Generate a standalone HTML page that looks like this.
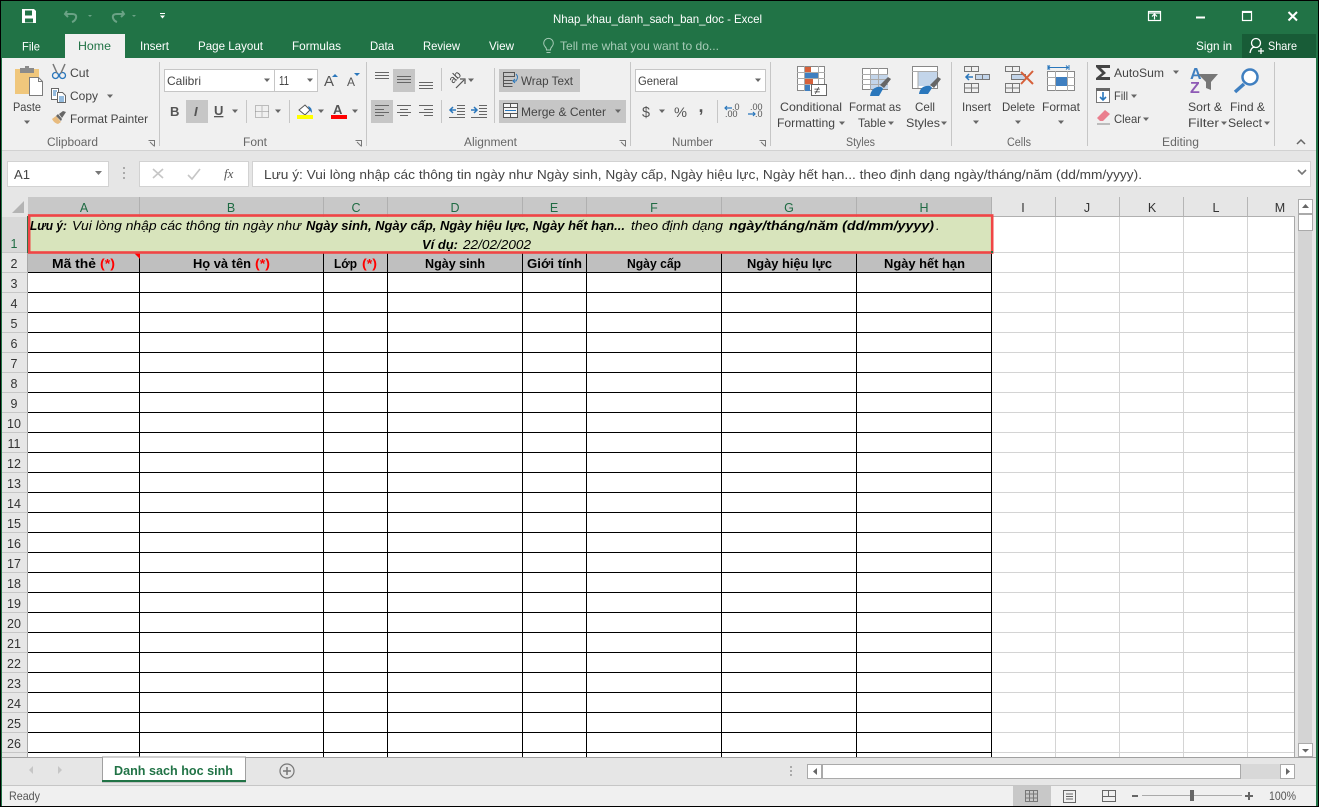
<!DOCTYPE html>
<html><head><meta charset="utf-8"><title>Excel</title>
<style>
html,body{margin:0;padding:0;background:#f0f0f0;overflow:hidden}
svg{display:block;position:absolute;left:0;top:0}
text{font-family:"Liberation Sans",sans-serif;font-size:12px;fill:#444;white-space:pre}
.w{fill:#fff}.t{font-size:12.5px}.l{fill:#666;font-size:11.5px}
.c{font-size:12.5px;fill:#000}.b{font-weight:bold}.i{font-style:italic}.r{fill:#f00}
.h{font-size:12.5px;text-anchor:middle;fill:#1f6b43}.u{fill:#333}
.n{font-size:12.5px;text-anchor:middle;fill:#333}
</style></head><body>
<svg width="1319" height="807" viewBox="0 0 1319 807" xmlns="http://www.w3.org/2000/svg">
<defs><path id="a" d="M-3-1.500h6l-3 3.500z" fill="#666"/></defs>
<!-- frame -->
<rect width="1319" height="807" fill="#000"/>
<rect x="1" y="1" width="1317" height="805" fill="#217346"/>
<rect x="2" y="58" width="1314" height="92" fill="#f0f0f0"/>
<rect x="2" y="150" width="1314" height="1" fill="#d2d2d2"/>
<rect x="2" y="151" width="1314" height="46" fill="#e6e6e6"/>
<!-- titlebar -->
<g fill="#fff">
<path fill-rule="evenodd" d="M22 9h12l2 2v12H22zM25 10.500v5h7v-5zM25 18.500v4h8v-4z"/>
<rect x="29" y="19.500" width="2" height="2.500" fill="#217346"/>
</g>
<g fill="none" stroke="#6aa285" stroke-width="2"><path d="M67 11l-2 3 3 3M66 14h6q5 0 4 4-1 3-4 4"/><path d="M122 11l2 3-3 3M123 14h-6q-5 0-4 4 1 3 4 4"/></g>
<path d="M88 15h4l-2 2zM132 15h4l-2 2z" fill="#6aa285"/>
<path d="M160 13h5v1h-5zM160 15.500h5l-2.500 3z" fill="#fff"/>
<text class="w" x="553" y="23" textLength="209" lengthAdjust="spacingAndGlyphs">Nhap_khau_danh_sach_ban_doc - Excel</text>
<g fill="none" stroke="#fff" stroke-width="1.200"><rect x="1148.500" y="11.500" width="12" height="9"/><path d="M1154.500 19.500v-5M1152 16.500l2.500-2.500 2.500 2.500M1148.500 13h12"/></g>
<rect x="1196" y="16.500" width="9" height="2" fill="#fff"/>
<rect x="1242.500" y="11.500" width="9" height="9" fill="none" stroke="#fff" stroke-width="1.200"/><rect x="1242" y="11" width="10" height="2" fill="#fff"/>
<path d="M1288.500 12l8.500 8.500M1297 12l-8.500 8.500" stroke="#fff" stroke-width="2"/>
<!-- tabs -->
<rect x="65" y="34" width="60" height="24" fill="#f0f0f0"/>
<text class="w" x="22" y="50.500" textLength="18" lengthAdjust="spacingAndGlyphs">File</text>
<text x="78" y="50" textLength="33" lengthAdjust="spacingAndGlyphs" style="fill:#217346">Home</text>
<text class="w" x="140" y="50" textLength="29" lengthAdjust="spacingAndGlyphs">Insert</text>
<text class="w" x="198" y="50" textLength="65" lengthAdjust="spacingAndGlyphs">Page Layout</text>
<text class="w" x="292" y="50" textLength="49" lengthAdjust="spacingAndGlyphs">Formulas</text>
<text class="w" x="370" y="50" textLength="24" lengthAdjust="spacingAndGlyphs">Data</text>
<text class="w" x="423" y="50" textLength="37" lengthAdjust="spacingAndGlyphs">Review</text>
<text class="w" x="489" y="50" textLength="25" lengthAdjust="spacingAndGlyphs">View</text>
<path d="M546.500 52.500h4M546.500 50q0-2-1.500-3.500a4.800 4.800 0 1 1 7 0q-1.500 1.500-1.500 3.500z" fill="none" stroke="#a6cbb6" stroke-width="1"/>
<text x="560" y="50" textLength="159" lengthAdjust="spacingAndGlyphs" style="fill:#a6cbb6">Tell me what you want to do...</text>
<text class="w" x="1196" y="50" textLength="36" lengthAdjust="spacingAndGlyphs">Sign in</text>
<rect x="1242" y="34" width="74" height="24" fill="#185c37"/>
<circle cx="1256" cy="43" r="4.500" fill="none" stroke="#fff" stroke-width="1.300"/><path d="M1250 53q1-6 5-6M1258 51h6M1261 48v6" fill="none" stroke="#fff" stroke-width="1.300"/>
<text class="w" x="1268" y="50" textLength="29" lengthAdjust="spacingAndGlyphs">Share</text>

<!-- separators -->
<g fill="#c6c6c6"><rect x="159" y="62" width="1" height="84"/><rect x="366" y="62" width="1" height="84"/><rect x="630" y="62" width="1" height="84"/><rect x="770" y="62" width="1" height="84"/><rect x="951" y="62" width="1" height="84"/><rect x="1087" y="62" width="1" height="84"/><rect x="1274" y="62" width="1" height="84"/><rect x="246" y="100" width="1" height="23"/><rect x="289" y="100" width="1" height="23"/><rect x="441" y="68" width="1" height="23"/><rect x="441" y="100" width="1" height="23"/><rect x="494" y="68" width="1" height="55"/><rect x="717" y="100" width="1" height="23"/></g>
<!-- launchers -->
<g fill="none" stroke="#777"><path d="M148.500 140.500h6v6M150 142l4 4"/><path d="M355.500 140.500h6v6M357 142l4 4"/><path d="M619.500 140.500h6v6M621 142l4 4"/><path d="M759.500 140.500h6v6M761 142l4 4"/></g>

<!-- Clipboard -->
<rect x="15" y="69" width="24" height="25" fill="#f0c77c"/>
<rect x="20" y="68" width="14" height="5" fill="#8b8b8b"/><rect x="25" y="66" width="4" height="4" fill="#8b8b8b"/>
<path d="M29.500 77.500h9l4 4v14h-13z" fill="#fff" stroke="#7c7c7c"/><path d="M38.500 77.500v4h4" fill="none" stroke="#7c7c7c"/>
<text x="13" y="111" textLength="28" lengthAdjust="spacingAndGlyphs">Paste</text><use href="#a" x="27" y="122"/>
<g fill="none" stroke="#2a77bc" stroke-width="1.300"><circle cx="55.500" cy="75.500" r="3"/><circle cx="62.500" cy="75.500" r="3"/></g>
<path d="M57 73L53 64M61 73l4-9" stroke="#777" stroke-width="1.500"/>
<text x="70" y="77" textLength="19" lengthAdjust="spacingAndGlyphs">Cut</text>
<g fill="#fff" stroke="#666"><path d="M51.500 88.500h7v11h-7z"/><path d="M57.500 92.500h5l3 3v7h-8z"/></g><path d="M59 97h5M59 99h5M59 101h5M53 91h4M53 93h3M53 95h3" stroke="#2a77bc"/>
<text x="70" y="100" textLength="28" lengthAdjust="spacingAndGlyphs">Copy</text><use href="#a" x="110" y="96"/>
<path d="M52 119l4-3 5 6-3 2q-4-1-6-5z" fill="#e8bb7e"/><path d="M56 116l2-2 4 5-1 2zM59 114l4-3 3 1-4 6z" fill="#666"/>
<text x="70" y="123" textLength="78" lengthAdjust="spacingAndGlyphs">Format Painter</text>
<text class="l" x="47" y="146" textLength="51" lengthAdjust="spacingAndGlyphs">Clipboard</text>

<!-- Font -->
<rect x="164.500" y="69.500" width="110" height="22" fill="#fff" stroke="#c6c6c6"/><rect x="274.500" y="69.500" width="43" height="22" fill="#fff" stroke="#c6c6c6"/>
<text x="167" y="85" textLength="34" lengthAdjust="spacingAndGlyphs">Calibri</text><use href="#a" x="267" y="80"/>
<text x="279" y="85" textLength="10" lengthAdjust="spacingAndGlyphs" style="font-size:13px">11</text><use href="#a" x="310" y="80"/>
<text x="324" y="86" style="font-size:15px;fill:#555" textLength="10" lengthAdjust="spacingAndGlyphs">A</text><path d="M332 77l3-3 3 3z" fill="#2a77bc"/>
<text x="347" y="86" style="font-size:12px;fill:#555" textLength="8" lengthAdjust="spacingAndGlyphs">A</text><path d="M354 73h6l-3 3z" fill="#2a77bc"/>
<rect x="186" y="100" width="22" height="23" fill="#c6c6c6"/>
<text x="170" y="116" class="b" style="font-size:13px;fill:#555">B</text>
<text x="194" y="116" class="i" style="font-size:13px;fill:#555;font-weight:bold">I</text>
<text x="214" y="115" class="b" style="font-size:13px;fill:#555;text-decoration:underline">U</text>
<use href="#a" x="235" y="111"/>
<path d="M255.500 105.500h13v12h-13zM255.500 111.500h13M262 105.500v12" fill="none" stroke="#888" stroke-dasharray="1 1"/><use href="#a" x="278" y="111"/>
<path d="M299 110l6-5 5 5-5 5z" fill="#fff" stroke="#555"/><path d="M308 106q4 1 4 7-3-3-4-7z" fill="#2a77bc"/>
<rect x="297" y="115" width="16" height="4" fill="#ff0"/><use href="#a" x="321" y="111"/>
<text x="333" y="114" class="b" style="font-size:13px;fill:#555">A</text><rect x="331" y="115" width="16" height="4" fill="#f00"/><use href="#a" x="355" y="111"/>
<text class="l" x="243" y="146" textLength="24" lengthAdjust="spacingAndGlyphs">Font</text>

<!-- Alignment -->
<rect x="393" y="69" width="22" height="23" fill="#c6c6c6"/><rect x="371" y="100" width="22" height="23" fill="#c6c6c6"/>
<path d="M375 72.500h14M375 75.500h14M375 78.500h14M397 76.500h14M397 79.500h14M397 82.500h14M419 82.500h14M419 85.500h14M419 88.500h14" stroke="#666"/>
<path d="M375 105.500h14M375 109.500h9M375 112.500h14M375 115.500h9M397 105.500h14M400 109.500h8M397 112.500h14M400 115.500h8M419 105.500h14M424 109.500h9M419 112.500h14M424 115.500h9" stroke="#666"/>
<text transform="translate(453 84) rotate(-45)" style="font-size:11px;fill:#444">ab</text>
<path d="M456 88l8-8" stroke="#555" stroke-width="1.200"/><path d="M460 79h5v5" fill="none" stroke="#555" stroke-width="1.200"/><use href="#a" x="471" y="80"/>
<path d="M457 105.500h8M457 108.500h8M457 111.500h8M457 114.500h8M449 117.500h16" stroke="#666"/><path d="M456 110h-6M453 107l-3 3 3 3" fill="none" stroke="#2a77bc" stroke-width="1.500"/>
<path d="M479 105.500h8M479 108.500h8M479 111.500h8M479 114.500h8M471 117.500h16" stroke="#666"/><path d="M471 110h6M474 107l3 3-3 3" fill="none" stroke="#2a77bc" stroke-width="1.500"/>
<rect x="499" y="69" width="81" height="23" fill="#c6c6c6"/><rect x="499" y="100" width="127" height="23" fill="#c6c6c6"/>
<path d="M503.500 72.500h11v4h-11zM503.500 80.500h9M503.500 83.500h9M503.500 76.500v10h9" fill="none" stroke="#555"/><path d="M516 74q3 3 0 7h-3M515 79l-2 2 2 2" fill="none" stroke="#2a77bc"/>
<text x="521" y="85" textLength="52" lengthAdjust="spacingAndGlyphs">Wrap Text</text>
<rect x="503.500" y="103.500" width="14" height="14" fill="#f4f4f4" stroke="#555"/><path d="M503.500 107.500h14M503.500 113.500h14M510.500 103.500v4M510.500 113.500v4" stroke="#555"/><path d="M505 110.500h11" stroke="#2a77bc"/>
<text x="521" y="116" textLength="85" lengthAdjust="spacingAndGlyphs">Merge &amp; Center</text><use href="#a" x="618" y="111"/>
<text class="l" x="464" y="146" textLength="53" lengthAdjust="spacingAndGlyphs">Alignment</text>

<!-- Number -->
<rect x="635.500" y="69.500" width="130" height="22" fill="#fff" stroke="#c6c6c6"/>
<text x="638" y="85" textLength="40" lengthAdjust="spacingAndGlyphs">General</text><use href="#a" x="758" y="80"/>
<text x="642" y="117" style="font-size:15px;fill:#555" textLength="8" lengthAdjust="spacingAndGlyphs">$</text><use href="#a" x="662" y="111"/>
<text x="674" y="117" style="font-size:14px;fill:#555" textLength="13" lengthAdjust="spacingAndGlyphs">%</text>
<text x="698.500" y="112" class="b" style="font-size:18px;fill:#555">,</text>
<text x="732" y="110" style="font-size:9px;fill:#555">.0</text><text x="725" y="117" style="font-size:9px;fill:#555">.00</text><path d="M725 108h7M727 106l-2 2 2 2" fill="none" stroke="#2a77bc" stroke-width="1.200"/>
<text x="750" y="110" style="font-size:9px;fill:#555">.00</text><text x="755" y="117" style="font-size:9px;fill:#555">.0</text><path d="M748 114h7M753 112l2 2-2 2" fill="none" stroke="#2a77bc" stroke-width="1.200"/>
<text class="l" x="672" y="146" textLength="41" lengthAdjust="spacingAndGlyphs">Number</text>

<!-- Styles: conditional -->
<rect x="797.500" y="66.500" width="27" height="24" fill="#fff" stroke="#888"/>
<path d="M797 72.500h28M797 78.500h28M797 84.500h28M804.500 66v25M818.500 66v25" stroke="#aaa"/>
<rect x="805" y="67" width="6" height="5" fill="#d6603a"/><rect x="805" y="73" width="13" height="5" fill="#3f7fc0"/><rect x="805" y="79" width="8" height="5" fill="#d6603a"/><rect x="805" y="85" width="5" height="6" fill="#3f7fc0"/>
<rect x="811.500" y="84.500" width="15" height="11" fill="#fff" stroke="#666"/><text x="814" y="94" style="font-size:11px;fill:#333">≠</text>
<text x="780" y="111" textLength="62" lengthAdjust="spacingAndGlyphs">Conditional</text>
<text x="777" y="127" textLength="58" lengthAdjust="spacingAndGlyphs">Formatting</text><use href="#a" x="842" y="123"/>
<!-- format as table -->
<rect x="862.500" y="68.500" width="25" height="21" fill="#fff" stroke="#888"/><rect x="870" y="74" width="18" height="15" fill="#c3d5ea"/>
<path d="M862 74.500h26M862 79.500h26M862 84.500h26M870.500 68v22M878.500 68v22" stroke="#aaa"/>
<path d="M880 85l8-8 3 2-7 9z" fill="#666"/><path d="M870 96q1-7 7-9 5-1 6 2l-4 7z" fill="#2a77bc"/>
<text x="849" y="111" textLength="52" lengthAdjust="spacingAndGlyphs">Format as</text>
<text x="858" y="127" textLength="28" lengthAdjust="spacingAndGlyphs">Table</text><use href="#a" x="891" y="123"/>
<!-- cell styles -->
<rect x="912.500" y="66.500" width="25" height="22" fill="#fff" stroke="#888"/><rect x="918" y="72" width="19" height="14" fill="#c3d5ea"/>
<path d="M912 71.500h26M918 72v16" stroke="#aaa"/>
<path d="M930 85l8-8 3 2-7 9z" fill="#666"/><path d="M919 94q1-7 7-8 5-1 6 2l-4 6z" fill="#2a77bc"/>
<text x="915" y="111" textLength="20" lengthAdjust="spacingAndGlyphs">Cell</text>
<text x="906" y="127" textLength="34" lengthAdjust="spacingAndGlyphs">Styles</text><use href="#a" x="944" y="123"/>
<text class="l" x="846" y="146" textLength="29" lengthAdjust="spacingAndGlyphs">Styles</text>

<!-- Cells -->
<g fill="none" stroke="#777"><path d="M964.500 66.500h14v5h-14zM971.500 66.500v5M964.500 83.500h14v9h-14zM964.500 88h14M971.500 83.500v9"/><rect x="975.500" y="74.500" width="14" height="5" fill="#c3d5ea"/><path d="M982.500 74.500v5"/></g>
<path d="M973 77h-7M969 74l-3 3 3 3" fill="none" stroke="#2a77bc" stroke-width="1.500"/>
<text x="962" y="111" textLength="29" lengthAdjust="spacingAndGlyphs">Insert</text><use href="#a" x="976" y="122"/>
<g fill="none" stroke="#777"><path d="M1005.500 66.500h14v5h-14zM1012.500 66.500v5M1005.500 83.500h14v9h-14zM1005.500 88h14M1012.500 83.500v9"/><rect x="1011.500" y="74.500" width="14" height="5" fill="#c3d5ea"/></g>
<path d="M1021 72l12 12M1033 71l-12 13" stroke="#d6603a" stroke-width="2"/>
<text x="1002" y="111" textLength="33" lengthAdjust="spacingAndGlyphs">Delete</text><use href="#a" x="1018" y="122"/>
<path d="M1048 67.500h20M1048 65v5M1069 65v5M1050 65.500l-2 2 2 2M1066 65.500l2 2-2 2" fill="none" stroke="#2a77bc"/>
<rect x="1047.500" y="71.500" width="27" height="19" fill="#fff" stroke="#888"/><path d="M1047 77.500h28M1047 85.500h28M1055.500 71v20M1067.500 71v20" stroke="#aaa"/>
<rect x="1056" y="77" width="11" height="9" fill="#3f7fc0"/>
<text x="1042" y="111" textLength="38" lengthAdjust="spacingAndGlyphs">Format</text><use href="#a" x="1061" y="122"/>
<text class="l" x="1007" y="146" textLength="24" lengthAdjust="spacingAndGlyphs">Cells</text>

<!-- Editing -->
<path d="M1096 65h14v3h-9l5 5-5 4h9v3h-14v-2l6-5-6-6z" fill="#444"/>
<text x="1114" y="77" textLength="50" lengthAdjust="spacingAndGlyphs">AutoSum</text><use href="#a" x="1176" y="72"/>
<rect x="1096.500" y="88.500" width="13" height="14" fill="#fff" stroke="#777"/><rect x="1096" y="88" width="14" height="3" fill="#666"/><path d="M1103 92v8M1100 97l3 3 3-3" fill="none" stroke="#2a77bc" stroke-width="1.600"/>
<text x="1114" y="100" textLength="14" lengthAdjust="spacingAndGlyphs">Fill</text><use href="#a" x="1134" y="96"/>
<path d="M1097 118l8-8 5 4-7 7h-3z" fill="#ea7f8e"/><path d="M1097 124h13" stroke="#888"/>
<text x="1114" y="123" textLength="27" lengthAdjust="spacingAndGlyphs">Clear</text><use href="#a" x="1146" y="119"/>
<text x="1190" y="79" class="b" style="font-size:16px;fill:#3f7fc0">A</text><text x="1190" y="93" class="b" style="font-size:16px;fill:#8e5ab5">Z</text>
<path d="M1198 74h20l-7 8v8l-5-2v-6z" fill="#777"/>
<circle cx="1250" cy="77" r="7.500" fill="#fff" stroke="#3f7fc0" stroke-width="2.500"/><path d="M1244 84l-9 8" stroke="#3f7fc0" stroke-width="3.500"/>
<text x="1188" y="111" textLength="34" lengthAdjust="spacingAndGlyphs">Sort &amp;</text>
<text x="1188" y="127" textLength="31" lengthAdjust="spacingAndGlyphs">Filter</text><use href="#a" x="1224" y="123"/>
<text x="1230" y="111" textLength="35" lengthAdjust="spacingAndGlyphs">Find &amp;</text>
<text x="1228" y="127" textLength="34" lengthAdjust="spacingAndGlyphs">Select</text><use href="#a" x="1267" y="123"/>
<text class="l" x="1162" y="146" textLength="37" lengthAdjust="spacingAndGlyphs">Editing</text>
<path d="M1297 144l4-4 4 4" fill="none" stroke="#666" stroke-width="1.500"/>

<!-- formula bar -->
<rect x="7.500" y="161.500" width="101" height="25" fill="#fff" stroke="#d2d2d2"/>
<text x="14" y="179" style="font-size:13px" textLength="16" lengthAdjust="spacingAndGlyphs">A1</text><path d="M95 171h7l-3.500 4z" fill="#777"/>
<path d="M124 167v2M124 172v2M124 177v2" stroke="#aaa" stroke-width="2"/>
<rect x="139.500" y="161.500" width="109" height="25" fill="#fff" stroke="#d2d2d2"/>
<path d="M153 169l10 9M163 169l-10 9M188 175l4 4 8-10" fill="none" stroke="#c6c6c6" stroke-width="1.600"/>
<text x="224" y="178" class="i" style="font-family:'Liberation Serif',serif;font-size:13px;fill:#555">fx</text>
<rect x="252.500" y="161.500" width="1058" height="25" fill="#fff" stroke="#d2d2d2"/>
<text x="264" y="179" style="font-size:13px" textLength="878" lengthAdjust="spacingAndGlyphs">Lưu ý: Vui lòng nhập các thông tin ngày như Ngày sinh, Ngày cấp, Ngày hiệu lực, Ngày hết hạn... theo định dạng ngày/tháng/năm (dd/mm/yyyy).</text>
<path d="M1298 170l4 4 4-4" fill="none" stroke="#777" stroke-width="1.600"/>

<!-- sheet area -->
<rect x="2" y="197" width="1314" height="560" fill="#e6e6e6"/>
<rect x="28" y="217" width="1267" height="540" fill="#fff"/>
<rect x="28" y="197" width="964" height="20" fill="#c8c8c8"/>
<rect x="2" y="197" width="26" height="20" fill="#e6e6e6"/>
<path d="M24 213V201l-12 12z" fill="#b4b4b4"/>
<rect x="2" y="217" width="26" height="36" fill="#d8d8d8"/>
<path d="M139.500 197v20M323.500 197v20M387.500 197v20M522.500 197v20M586.500 197v20M721.500 197v20M856.500 197v20M991.500 197v20" stroke="#b0b0b0"/>
<path d="M1055.500 197v20M1119.500 197v20M1183.500 197v20M1247.500 197v20" stroke="#b5b5b5"/>
<path d="M992 216.500h303" stroke="#b0b0b0"/>
<path d="M27.500 253v504" stroke="#a8a8a8"/>
<path d="M2 252.500h26M2 272.500h26M2 292.500h26M2 312.500h26M2 332.500h26M2 352.500h26M2 372.500h26M2 392.500h26M2 412.500h26M2 432.500h26M2 452.500h26M2 472.500h26M2 492.500h26M2 512.500h26M2 532.500h26M2 552.500h26M2 572.500h26M2 592.500h26M2 612.500h26M2 632.500h26M2 652.500h26M2 672.500h26M2 692.500h26M2 712.500h26M2 732.500h26M2 752.500h26" stroke="#c6c6c6"/>
<!-- light gridlines -->
<path d="M992 252.500h303M992 272.500h303M992 292.500h303M992 312.500h303M992 332.500h303M992 352.500h303M992 372.500h303M992 392.500h303M992 412.500h303M992 432.500h303M992 452.500h303M992 472.500h303M992 492.500h303M992 512.500h303M992 532.500h303M992 552.500h303M992 572.500h303M992 592.500h303M992 612.500h303M992 632.500h303M992 652.500h303M992 672.500h303M992 692.500h303M992 712.500h303M992 732.500h303M992 752.500h303M1055.500 217v540M1119.500 217v540M1183.500 217v540M1247.500 217v540" stroke="#d4d4d4"/>
<!-- row 1, 2 fill -->
<rect x="28" y="217" width="963" height="35" fill="#d8e4bc"/>
<rect x="28" y="253" width="963" height="19" fill="#bfbfbf"/>
<!-- black grid -->
<path d="M28 272.500h964M28 292.500h964M28 312.500h964M28 332.500h964M28 352.500h964M28 372.500h964M28 392.500h964M28 412.500h964M28 432.500h964M28 452.500h964M28 472.500h964M28 492.500h964M28 512.500h964M28 532.500h964M28 552.500h964M28 572.500h964M28 592.500h964M28 612.500h964M28 632.500h964M28 652.500h964M28 672.500h964M28 692.500h964M28 712.500h964M28 732.500h964M28 752.500h964M139.500 253v504M323.500 253v504M387.500 253v504M522.500 253v504M586.500 253v504M721.500 253v504M856.500 253v504M991.500 253v504" stroke="#000"/>
<path d="M134 253h6v6z" fill="#f00"/>
<!-- red rect -->
<path d="M27.500 216v37" stroke="#217346"/>
<rect x="29.200" y="215.500" width="963" height="37" fill="none" stroke="#f04545" stroke-width="2.600"/>
<rect x="991" y="251" width="2" height="2" fill="#217346"/>
<!-- col heads -->
<text class="h" x="84" y="212">A</text><text class="h" x="231" y="212">B</text><text class="h" x="356" y="212">C</text><text class="h" x="455" y="212">D</text><text class="h" x="554" y="212">E</text><text class="h" x="654" y="212">F</text><text class="h" x="789" y="212">G</text><text class="h" x="924" y="212">H</text>
<text class="n" x="1023" y="212">I</text><text class="n" x="1087" y="212">J</text><text class="n" x="1152" y="212">K</text><text class="n" x="1216" y="212">L</text>
<!-- row numbers -->
<text class="h" x="14" y="248">1</text><text class="n" x="14" y="268">2</text><text class="n" x="14" y="288">3</text><text class="n" x="14" y="308">4</text><text class="n" x="14" y="328">5</text><text class="n" x="14" y="348">6</text><text class="n" x="14" y="368">7</text><text class="n" x="14" y="388">8</text><text class="n" x="14" y="408">9</text><text class="n" x="14" y="428">10</text><text class="n" x="14" y="448">11</text><text class="n" x="14" y="468">12</text><text class="n" x="14" y="488">13</text><text class="n" x="14" y="508">14</text><text class="n" x="14" y="528">15</text><text class="n" x="14" y="548">16</text><text class="n" x="14" y="568">17</text><text class="n" x="14" y="588">18</text><text class="n" x="14" y="608">19</text><text class="n" x="14" y="628">20</text><text class="n" x="14" y="648">21</text><text class="n" x="14" y="668">22</text><text class="n" x="14" y="688">23</text><text class="n" x="14" y="708">24</text><text class="n" x="14" y="728">25</text><text class="n" x="14" y="748">26</text>
<!-- row 1 text -->
<text class="c b i" x="30" y="230" textLength="37" lengthAdjust="spacingAndGlyphs">Lưu ý:</text>
<text class="c i" x="72" y="230" textLength="229" lengthAdjust="spacingAndGlyphs">Vui lòng nhập các thông tin ngày như</text>
<text class="c b i" x="306" y="230" textLength="319" lengthAdjust="spacingAndGlyphs">Ngày sinh, Ngày cấp, Ngày hiệu lực, Ngày hết hạn...</text>
<text class="c i" x="631" y="230" textLength="92" lengthAdjust="spacingAndGlyphs">theo định dạng</text>
<text class="c b i" x="729" y="230" textLength="205" lengthAdjust="spacingAndGlyphs">ngày/tháng/năm (dd/mm/yyyy)</text>
<text class="c i" x="936" y="230">.</text>
<text class="c b i" x="422" y="249" textLength="36" lengthAdjust="spacingAndGlyphs">Ví dụ:</text>
<text class="c i" x="463" y="249" textLength="68" lengthAdjust="spacingAndGlyphs">22/02/2002</text>
<!-- row 2 text -->
<text class="c b" x="52" y="268" textLength="44" lengthAdjust="spacingAndGlyphs">Mã thẻ</text><text class="c b r" x="100" y="268" textLength="15" lengthAdjust="spacingAndGlyphs">(*)</text>
<text class="c b" x="193" y="268" textLength="58" lengthAdjust="spacingAndGlyphs">Họ và tên</text><text class="c b r" x="255" y="268" textLength="15" lengthAdjust="spacingAndGlyphs">(*)</text>
<text class="c b" x="334" y="268" textLength="23" lengthAdjust="spacingAndGlyphs">Lớp</text><text class="c b r" x="362" y="268" textLength="15" lengthAdjust="spacingAndGlyphs">(*)</text>
<text class="c b" x="425" y="268" textLength="60" lengthAdjust="spacingAndGlyphs">Ngày sinh</text>
<text class="c b" x="527" y="268" textLength="55" lengthAdjust="spacingAndGlyphs">Giới tính</text>
<text class="c b" x="627" y="268" textLength="54" lengthAdjust="spacingAndGlyphs">Ngày cấp</text>
<text class="c b" x="747" y="268" textLength="85" lengthAdjust="spacingAndGlyphs">Ngày hiệu lực</text>
<text class="c b" x="884" y="268" textLength="81" lengthAdjust="spacingAndGlyphs">Ngày hết hạn</text>

<!-- right edge of sheet -->
<path d="M1294.500 217v540" stroke="#a8a8a8"/>
<rect x="1295" y="197" width="21" height="560" fill="#e6e6e6"/>
<text class="n" x="1280" y="212">M</text>
<rect x="1298" y="199" width="14" height="558" fill="#d4d4d4"/>
<rect x="1298.500" y="199.500" width="14" height="14" fill="#fff" stroke="#aaa"/><path d="M1302 208l3.500-4 3.500 4z" fill="#666"/>
<rect x="1298.500" y="214.500" width="14" height="16" fill="#fff" stroke="#aaa"/>
<rect x="1298.500" y="743.500" width="14" height="13" fill="#fff" stroke="#aaa"/><path d="M1302 749h7l-3.500 3.500z" fill="#666"/>

<!-- tab bar -->
<rect x="2" y="757" width="1314" height="28" fill="#e6e6e6"/>
<path d="M2 757.500h1314" stroke="#a0a0a0"/>
<rect x="102.500" y="757" width="143" height="25" fill="#fff" stroke="#a0a0a0"/>
<rect x="102" y="780" width="144" height="2" fill="#217346"/>
<text x="114" y="775" class="b" style="font-size:13px;fill:#217346" textLength="119" lengthAdjust="spacingAndGlyphs">Danh sach hoc sinh</text>
<path d="M33 766l-4 4 4 4zM58 766l4 4-4 4z" fill="#c6c6c6"/>
<circle cx="287" cy="771" r="7" fill="none" stroke="#777" stroke-width="1.200"/><path d="M283 771h8M287 767v8" stroke="#777" stroke-width="1.500"/>
<path d="M791 766v2M791 770v2M791 774v2" stroke="#aaa" stroke-width="2"/>
<rect x="807" y="764" width="488" height="15" fill="#d8d8d8"/>
<rect x="807.500" y="764.500" width="14" height="14" fill="#fff" stroke="#aaa"/><path d="M817 768l-4 3.500 4 3.500z" fill="#666"/>
<rect x="822.500" y="764.500" width="418" height="14" fill="#fff" stroke="#aaa"/>
<rect x="1280.500" y="764.500" width="14" height="14" fill="#fff" stroke="#aaa"/><path d="M1286 768l4 3.500-4 3.500z" fill="#666"/>

<!-- status -->
<rect x="2" y="785" width="1314" height="21" fill="#f0f0f0"/><path d="M2 785.500h1314" stroke="#c6c6c6"/>
<text x="9" y="800" textLength="31" lengthAdjust="spacingAndGlyphs" style="fill:#555">Ready</text>
<rect x="1013" y="786" width="38" height="20" fill="#c8c8c8"/>
<path d="M1025.500 790.500h12v11h-12zM1025.500 794h12M1025.500 798h12M1029.500 790.500v11M1033.500 790.500v11" fill="none" stroke="#777"/>
<path d="M1063.500 790.500h12v12h-12z M1066 794h7M1066 796.500h7M1066 799h7" fill="none" stroke="#666"/>
<path d="M1102.500 790.500h13v11h-13zM1108.500 790.500v6h-6M1108.500 796.500h7" fill="none" stroke="#666"/>
<rect x="1132" y="795" width="6" height="2" fill="#666"/>
<rect x="1142" y="795" width="100" height="1" fill="#aaa"/>
<rect x="1190" y="790" width="4" height="11" fill="#666"/>
<path d="M1245 796h8M1249 792v8" stroke="#666" stroke-width="2"/>
<text x="1269" y="800" textLength="27" lengthAdjust="spacingAndGlyphs" style="fill:#555">100%</text>
<!-- frame overlays -->
<rect x="0" y="0" width="1319" height="1" fill="#000"/><rect x="0" y="806" width="1319" height="1" fill="#000"/>
<rect x="0" y="0" width="1" height="807" fill="#000"/><rect x="1318" y="0" width="1" height="807" fill="#000"/>
<rect x="1" y="58" width="1" height="748" fill="#217346"/><rect x="1316" y="58" width="2" height="748" fill="#217346"/>
</svg>
</body></html>
